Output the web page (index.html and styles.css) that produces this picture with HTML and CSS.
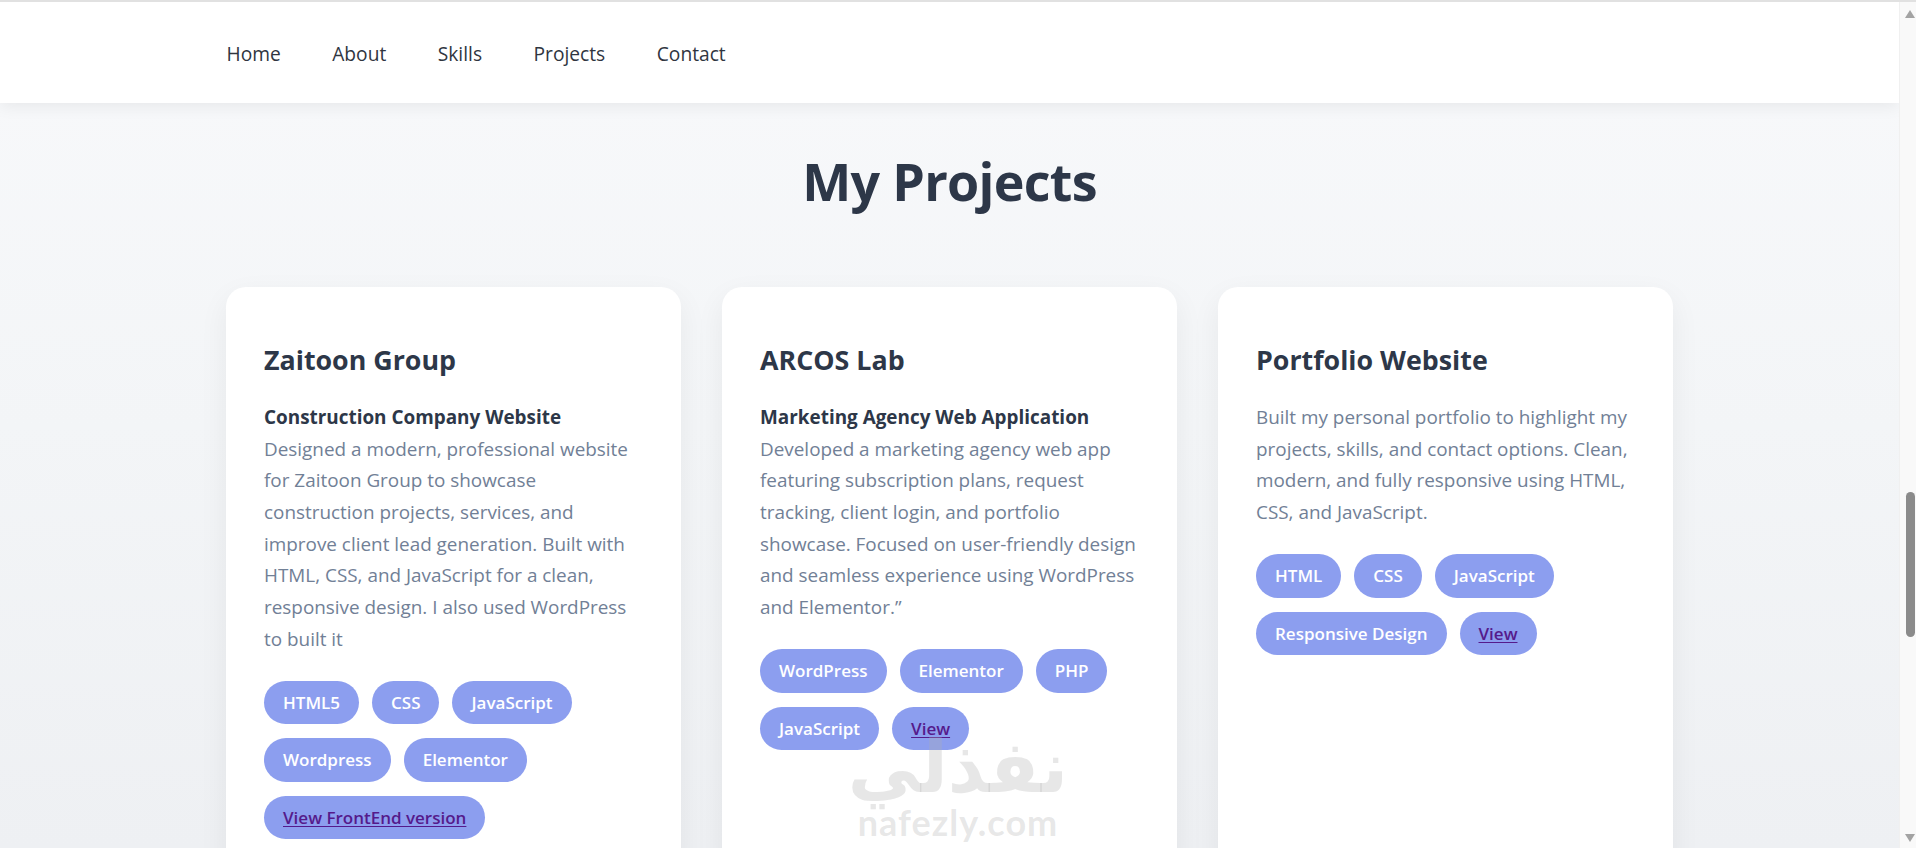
FILE: index.html
```html
<!DOCTYPE html>
<html lang="en">
<head>
<meta charset="utf-8">
<title>My Projects</title>
<link rel="stylesheet" href="styles.css">
</head>
<body>
<div class="app">
  <div class="page">
    <header class="nav">
      <nav class="nav-inner">
        <a href="#home">Home</a>
        <a href="#about">About</a>
        <a href="#skills">Skills</a>
        <a href="#projects">Projects</a>
        <a href="#contact">Contact</a>
      </nav>
    </header>

    <section class="projects" id="projects">
      <h2 class="section-title">My Projects</h2>
      <div class="grid">
        <article class="card">
          <h3 class="card-title">Zaitoon Group</h3>
          <p class="card-text"><strong>Construction Company Website</strong><br>Designed a modern, professional website for Zaitoon Group to showcase construction projects, services, and improve client lead generation. Built with HTML, CSS, and JavaScript for a clean, responsive design. I also used WordPress to built it</p>
          <div class="tags">
            <span class="tag">HTML5</span>
            <span class="tag">CSS</span>
            <span class="tag">JavaScript</span>
            <span class="tag">Wordpress</span>
            <span class="tag">Elementor</span>
            <span class="tag"><a class="tag-link" href="#">View FrontEnd version</a></span>
          </div>
        </article>

        <article class="card">
          <h3 class="card-title">ARCOS Lab</h3>
          <p class="card-text"><strong>Marketing Agency Web Application</strong><br>Developed a marketing agency web app featuring subscription plans, request tracking, client login, and portfolio showcase. Focused on user-friendly design and seamless experience using WordPress and Elementor.”</p>
          <div class="tags">
            <span class="tag">WordPress</span>
            <span class="tag">Elementor</span>
            <span class="tag">PHP</span>
            <span class="tag">JavaScript</span>
            <span class="tag"><a class="tag-link" href="#">View</a></span>
          </div>
        </article>

        <article class="card">
          <h3 class="card-title">Portfolio Website</h3>
          <p class="card-text">Built my personal portfolio to highlight my projects, skills, and contact options. Clean, modern, and fully responsive using HTML, CSS, and JavaScript.</p>
          <div class="tags">
            <span class="tag">HTML</span>
            <span class="tag">CSS</span>
            <span class="tag">JavaScript</span>
            <span class="tag">Responsive Design</span>
            <span class="tag"><a class="tag-link" href="#">View</a></span>
          </div>
        </article>
      </div>
    </section>

    <div class="watermark" aria-hidden="true">
      <span class="wm-ar">نفذلي</span>
      <span class="wm-en">nafezly.com</span>
    </div>
  </div>

  <div class="scrollbar" aria-hidden="true">
    <span class="sb-arrow sb-up"></span>
    <span class="sb-thumb"></span>
    <span class="sb-arrow sb-down"></span>
  </div>
</div>
</body>
</html>
```
FILE: styles.css
```css
* { box-sizing: border-box; }

html, body {
  margin: 0;
  height: 100%;
  overflow: hidden;
}

body {
  font-family: "Open Sans", "Noto Sans", sans-serif;
  color: #2d3748;
  background: #ffffff;
}

.app {
  height: 100vh;
  display: flex;
  border-top: 2px solid #e1e1e1;
}

.page {
  flex: 1;
  position: relative;
  overflow: hidden;
  background: linear-gradient(to bottom, #f8f9fb 0%, #f3f5f7 50%, #eef0f3 100%);
}

/* ---------- nav ---------- */
.nav {
  background: #ffffff;
  box-shadow: 0 3px 16px rgba(0, 0, 0, 0.07);
  position: relative;
  z-index: 2;
}

.nav-inner {
  width: 1448px;
  margin: 0 auto;
  display: flex;
  gap: 51.5px;
  padding: 38.8px 0 36.2px 1px;
}

.nav-inner a {
  font-size: 19.2px;
  line-height: 25.7px;
  font-weight: 500;
  color: #30353f;
  text-decoration: none;
}

/* ---------- projects ---------- */
.projects {
  width: 1447px;
  margin: 0 auto;
  padding-top: 47.6px;
}

.section-title {
  margin: 0 0 74px;
  text-align: center;
  font-size: 52px;
  line-height: 62.4px;
  font-weight: 700;
  letter-spacing: -0.7px;
  color: #2d3748;
}

.grid {
  display: grid;
  grid-template-columns: repeat(3, 1fr);
  gap: 41px;
}

.card {
  background: #ffffff;
  border-radius: 20px;
  padding: 55px 37px 38px 38px;
  box-shadow: 0 10px 30px rgba(0, 0, 0, 0.06);
}

.card-title {
  margin: 0 0 24.2px;
  font-size: 26.8px;
  line-height: 36px;
  font-weight: 700;
  color: #2d3748;
}

.card-text {
  margin: 0 0 25.6px;
  font-size: 18.9px;
  line-height: 31.7px;
  color: #718096;
}

.card-text strong {
  color: #2d3748;
  font-weight: 700;
}

.tags {
  display: flex;
  flex-wrap: wrap;
  gap: 14px 13px;
}

.tag {
  background: #8c9eef;
  color: #ffffff;
  font-size: 17px;
  line-height: 23.3px;
  font-weight: 600;
  padding: 10px 19px;
  border-radius: 25px;
}

.tag-link {
  color: #551a8b;
  text-decoration: underline;
  text-underline-offset: 2px;
}

/* ---------- watermark ---------- */
.watermark {
  position: absolute;
  left: 846px;
  top: 722px;
  width: 224px;
  display: flex;
  flex-direction: column;
  align-items: center;
  pointer-events: none;
  z-index: 3;
}

.wm-ar {
  font-family: "DejaVu Sans", sans-serif;
  font-weight: 700;
  font-size: 72px;
  line-height: 86px;
  color: rgba(175, 175, 175, 0.3);
  direction: rtl;
}

.wm-en {
  font-family: "Lato", "Noto Sans", sans-serif;
  font-weight: 700;
  font-size: 36px;
  line-height: 36px;
  letter-spacing: 1px;
  color: rgba(175, 175, 175, 0.3);
  margin-top: -6px;
}

/* ---------- fake scrollbar ---------- */
.scrollbar {
  width: 17px;
  background: #f9f9f9;
  border-left: 1px solid #f0f0f0;
  display: flex;
  flex-direction: column;
  align-items: center;
  padding: 8px 0 6px 4px;
}

.sb-arrow {
  width: 0;
  height: 0;
  border-left: 5px solid transparent;
  border-right: 5px solid transparent;
}

.sb-up {
  border-bottom: 8px solid #a3a3a3;
}

.sb-down {
  border-top: 8px solid #a3a3a3;
}

.sb-thumb {
  width: 9px;
  height: 145px;
  margin-top: 474px;
  margin-bottom: auto;
  border-radius: 5px;
  background: #8b8b8b;
}
```
